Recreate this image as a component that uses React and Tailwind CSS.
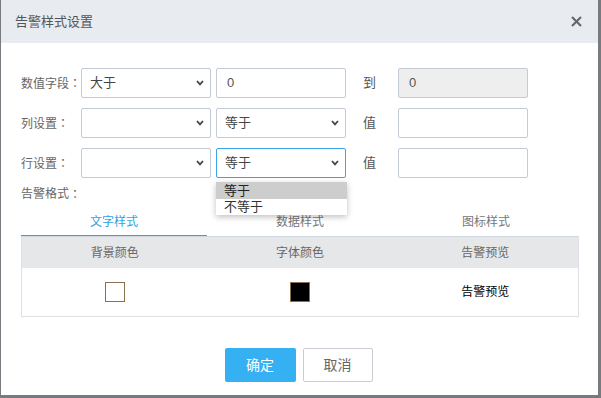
import React from "react";

function Chevron() {
  return (
    <svg width="8" height="6" viewBox="0 0 8 6" className="block">
      <polyline points="1,1 4,4.3 7,1" fill="none" stroke="#444" strokeWidth="1.8" />
    </svg>
  );
}

function Select({ value, focused, children }) {
  return (
    <div
      className={`relative flex h-[30px] w-[130px] shrink-0 items-center justify-between rounded-[2px] border bg-white pl-[8px] pr-[6px] text-[13px] text-[#444] ${
        focused ? "border-[#3ba4e6]" : "border-[#c3cbd6]"
      }`}
    >
      <span>{value}</span>
      <Chevron />
      {children}
    </div>
  );
}

function Input({ value, disabled }) {
  return (
    <div
      className={`flex h-[30px] w-[130px] shrink-0 items-center rounded-[2px] border border-[#c3cbd6] pl-[10px] text-[13px] text-[#555] ${
        disabled ? "bg-[#eeeeee]" : "bg-white"
      }`}
    >
      {value}
    </div>
  );
}

function Colon() {
  return <span className="font-['Noto_Sans_CJK_TC',sans-serif]">：</span>;
}

function Label({ text }) {
  return (
    <div className="w-[60px] shrink-0 whitespace-nowrap text-[12px] text-[#666]">
      {text}
      <Colon />
    </div>
  );
}

function Mid({ children }) {
  return <div className="w-[52px] shrink-0 pl-[17px] text-[13px] text-[#555]">{children}</div>;
}

export default function App() {
  return (
    <div className="h-[398px] w-[601px] overflow-hidden bg-[#777b7f] font-['Liberation_Sans','Noto_Sans_CJK_SC',sans-serif]">
      <div className="ml-[1px] flex h-[395px] w-[597px] flex-col bg-white">
        <div className="flex h-[43px] items-center justify-between bg-[#e8ebef] pl-[14px] pr-[16px]">
          <span className="text-[13px] text-[#555]">告警样式设置</span>
          <svg width="11" height="11" viewBox="0 0 11 11">
            <path d="M1 1 L10 10 M10 1 L1 10" stroke="#666" strokeWidth="2.1" />
          </svg>
        </div>

        <div className="flex flex-col pl-[20px] pt-[25px]">
          <div className="flex items-center">
            <Label text="数值字段" />
            <Select value="大于" />
            <div className="w-[5px] shrink-0" />
            <Input value="0" />
            <Mid>到</Mid>
            <Input value="0" disabled />
          </div>
          <div className="mt-[10px] flex items-center">
            <Label text="列设置" />
            <Select value="" />
            <div className="w-[5px] shrink-0" />
            <Select value="等于" />
            <Mid>值</Mid>
            <Input value="" />
          </div>
          <div className="mt-[10px] flex items-center">
            <Label text="行设置" />
            <Select value="" />
            <div className="w-[5px] shrink-0" />
            <Select value="等于" focused>
              <div className="absolute left-[-1px] top-[33px] z-10 w-[131px] bg-white text-[13px] shadow-[0_2px_6px_rgba(0,0,0,0.25)]">
                <div className="flex h-[17px] items-center bg-[#cdcdcd] pl-[8px] text-[#222]">等于</div>
                <div className="flex h-[16px] items-center pl-[8px] text-[#333]">不等于</div>
              </div>
            </Select>
            <Mid>值</Mid>
            <Input value="" />
          </div>

          <div className="mt-[6px] flex h-[20px] items-center whitespace-nowrap text-[12px] text-[#666]">
            告警格式
            <Colon />
          </div>

          <div className="mt-[5px] w-[558px]">
            <div className="flex h-[27px] text-[12px]">
              <div className="flex flex-1 items-center justify-center border-b border-[#2ea3e6] text-[#2ea3e6]">文字样式</div>
              <div className="flex flex-1 items-center justify-center border-b border-transparent text-[#777]">数据样式</div>
              <div className="flex flex-1 items-center justify-center border-b border-transparent text-[#777]">图标样式</div>
            </div>
            <div className="border border-[#dde1e6] border-t-[#cfd8e1]">
              <div className="flex h-[31px] items-center bg-[#e6e7e9] text-[12px] text-[#666]">
                <div className="flex-1 text-center">背景颜色</div>
                <div className="flex-1 text-center">字体颜色</div>
                <div className="flex-1 text-center">告警预览</div>
              </div>
              <div className="flex h-[48px] items-center">
                <div className="flex flex-1 justify-center">
                  <div className="h-[20px] w-[20px] border border-[#8c7052] bg-white" />
                </div>
                <div className="flex flex-1 justify-center">
                  <div className="h-[20px] w-[20px] border border-[#8c7052] bg-black" />
                </div>
                <div className="flex flex-1 justify-center text-[12px] text-black">告警预览</div>
              </div>
            </div>
          </div>
        </div>

        <div className="mt-[31px] flex justify-center gap-[7px] pr-[2px]">
          <div className="flex h-[34px] w-[71px] items-center justify-center rounded-[2px] bg-[#35b0f2] text-[14px] text-white">确定</div>
          <div className="flex h-[34px] w-[70px] items-center justify-center rounded-[2px] border border-[#c8cdd3] bg-white text-[14px] text-[#666]">取消</div>
        </div>
      </div>
    </div>
  );
}
